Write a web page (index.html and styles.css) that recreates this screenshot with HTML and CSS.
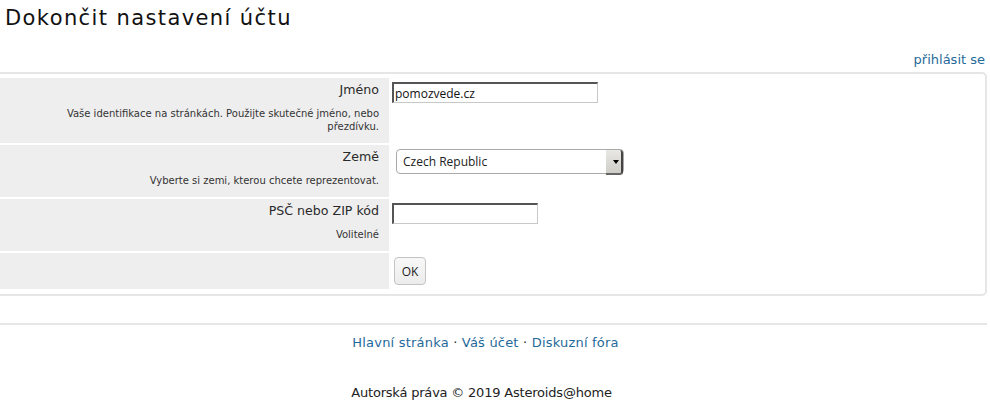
FILE: index.html
```html
<!DOCTYPE html>
<html lang="cs">

<head>
	<meta charset="utf-8">
	<meta name="viewport" content="width=device-width, initial-scale=1.0">
	<title>Dokončit nastavení účtu</title>
	<link rel="stylesheet" href="styles.css">
</head>

<body>
	<h1 class="page_title">Dokončit nastavení účtu</h1>

	<div class="login_bar">
		<a href="#">přihlásit se</a>
	</div>

	<div class="panel">
		<form>
			<table class="form_table">
				<tr>
					<td class="label_cell">
						<span class="field_name">Jméno</span>
						<p class="field_help">Vaše identifikace na stránkách. Použijte skutečné jméno, nebo přezdívku.</p>
					</td>
					<td class="value_cell">
						<input type="text" class="text_input name_input" value="pomozvede.cz">
					</td>
				</tr>
				<tr>
					<td class="label_cell">
						<span class="field_name">Země</span>
						<p class="field_help">Vyberte si zemi, kterou chcete reprezentovat.</p>
					</td>
					<td class="value_cell">
						<span class="select_wrap">
							<select class="country_select">
								<option>Czech Republic</option>
							</select>
						</span>
					</td>
				</tr>
				<tr>
					<td class="label_cell">
						<span class="field_name">PSČ nebo ZIP kód</span>
						<p class="field_help">Volitelné</p>
					</td>
					<td class="value_cell">
						<input type="text" class="text_input zip_input" value="">
					</td>
				</tr>
				<tr>
					<td class="label_cell empty_cell"></td>
					<td class="value_cell">
						<button type="button" class="ok_button">OK</button>
					</td>
				</tr>
			</table>
		</form>
	</div>

	<footer>
		<hr>
		<p class="footer_links">
			<a href="#">Hlavní stránka</a> · <a href="#">Váš účet</a> · <a href="#">Diskuzní fóra</a>
		</p>
		<p class="copyright">Autorská práva © 2019 Asteroids@home</p>
	</footer>
</body>

</html>
```

FILE: styles.css
```css
* {
	margin: 0;
	box-sizing: border-box;
}

body {
	font-family: "DejaVu Sans", Verdana, sans-serif;
	font-size: 13px;
	color: #222;
	background: #fff;
	padding: 0 3px 0 0;
	overflow: hidden;
}

a {
	color: #1f6a9a;
	text-decoration: none;
}

.page_title {
	font-weight: normal;
	font-size: 21px;
	letter-spacing: 1.4px;
	line-height: 28px;
	padding: 4px 0 0 5px;
	color: #111;
}

.login_bar {
	text-align: right;
	margin-top: 20px;
	line-height: 16px;
	padding-right: 2px;
}

.panel {
	margin: 4px 0 0 -6px;
	border: 2px solid #e6e6e6;
	border-radius: 5px;
	padding: 2px 2px 3px 2px;
}

.form_table {
	width: 100%;
	border-spacing: 2px;
}

.label_cell {
	width: 389px;
	background: #eeeeee;
	text-align: right;
	vertical-align: top;
	padding: 4px 10px 10px 10px;
}

.field_name {
	display: block;
	line-height: 16px;
	color: #2a2a2a;
	font-size: 12.6px;
}

.field_help {
	font-size: 10px;
	line-height: 13px;
	color: #333;
	margin-top: 9px;
	padding-left: 12px;
}

.value_cell {
	vertical-align: top;
	padding: 4px 3px 4px 1px;
}

.text_input {
	display: block;
	height: 21px;
	font-family: "Open Sans", sans-serif;
	font-size: 12px;
	color: #111;
	padding: 0 1px;
	border: 1px solid #c8c8c8;
	border-top: 2px solid #555;
	border-left: 2px solid #555;
	background: #fff;
}

.name_input {
	width: 206px;
}

.zip_input {
	width: 146px;
}

.select_wrap {
	position: relative;
	display: inline-block;
	margin: 0 0 0 4px;
}

.country_select {
	display: block;
	appearance: none;
	width: 228px;
	height: 25px;
	font-family: "Open Sans", sans-serif;
	font-size: 12px;
	color: #222;
	padding: 0 6px;
	border: 1px solid #aaa;
	border-radius: 4px;
	background: #fff;
}

.select_wrap::after {
	content: "";
	position: absolute;
	right: 1px;
	top: 1px;
	width: 15px;
	height: 23px;
	border-radius: 0 3px 3px 0;
	border-right: 2px solid #444;
	border-bottom: 2px solid #666;
	background: linear-gradient(#e9e8e4, #cfcdc7);
}

.select_wrap::before {
	content: "";
	position: absolute;
	z-index: 1;
	right: 5px;
	top: 11px;
	border-left: 3px solid transparent;
	border-right: 3px solid transparent;
	border-top: 4px solid #000;
}

.ok_button {
	display: block;
	margin-left: 2px;
	width: 32px;
	height: 28px;
	font-family: "Open Sans", sans-serif;
	font-size: 12px;
	color: #222;
	border: 1px solid #c4c4c4;
	border-radius: 4px;
	background: linear-gradient(#f8f8f8, #ececec);
	padding: 0;
}

footer hr {
	margin-top: 27px;
	border: 0;
	height: 2px;
	background: #e6e6e6;
}

.footer_links,
.copyright {
	text-align: center;
	padding-right: 16px;
	line-height: 16px;
}

.footer_links {
	margin-top: 10px;
	letter-spacing: 0.2px;
}

.copyright {
	margin-top: 34px;
	padding-right: 24px;
	letter-spacing: -0.2px;
}
```
